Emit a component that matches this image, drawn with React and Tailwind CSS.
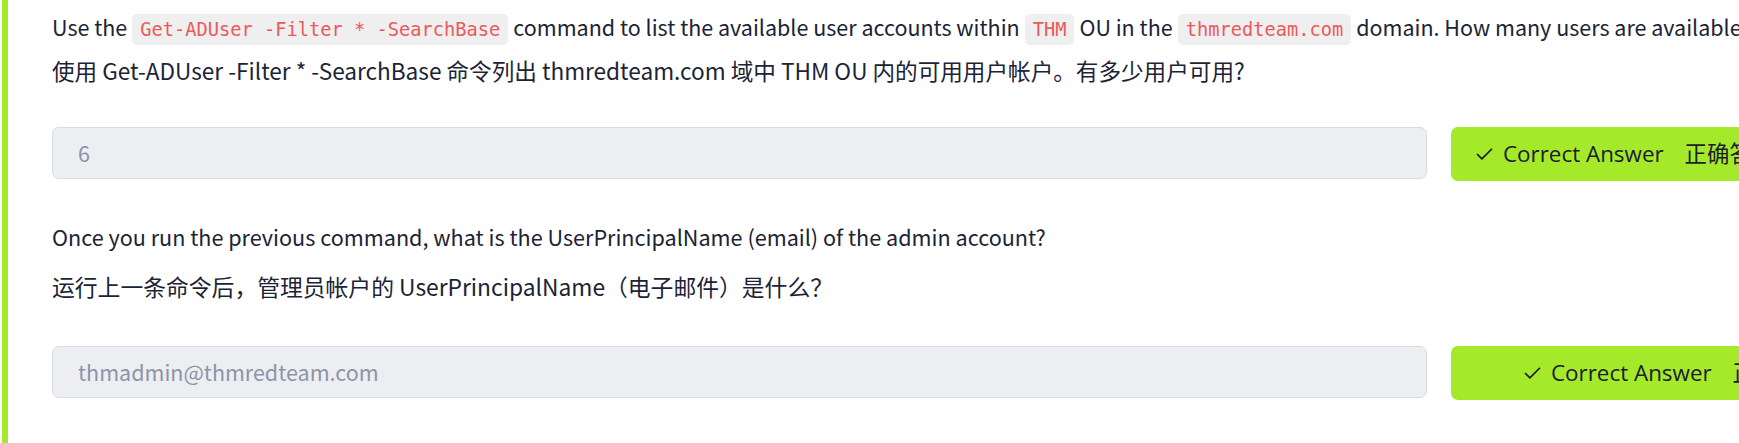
import { Check } from "lucide-react";

const body = { fontFamily: '"Noto Sans CJK SC", "Noto Sans", sans-serif' };
const mono = { fontFamily: '"DejaVu Sans Mono", "Liberation Mono", monospace' };

const Code = ({ children }) => (
    <code style={mono} className="mx-[5px] rounded-[5px] bg-[#efefef] px-[8px] py-[5px] text-[18.7px] text-[#eb5a5a]">
        {children}
    </code>
);

const AnswerRow = ({ value, pad }) => (
    <div className="flex items-start gap-[24px]">
        <div className="flex h-[52px] w-[1375px] shrink-0 items-center rounded-[7px] border border-[#d8dbe2] bg-[#edeef2] pl-[25px] text-[21.5px] text-[#8c95a8]">
            {value}
        </div>
        <button
            className={`flex h-[54px] w-[460px] shrink-0 items-center gap-[8px] rounded-[7px] bg-[#a4ea2a] text-[22.4px] text-[#1c1c2b] ${pad}`}
            style={{ fontFamily: '"Open Sans", "Noto Sans CJK SC", sans-serif' }}
        >
            <Check size={21} strokeWidth={2} />
            <span className="whitespace-nowrap">
                Correct Answer<span className="ml-[21px]">正确答案</span>
            </span>
        </button>
    </div>
);

const App = () => {
    return (
        <div style={body} className="flex h-[443px] w-[1739px] overflow-hidden bg-white text-[#1c2336]">
            <div className="ml-[2px] w-[6px] shrink-0 bg-[#a4ea2a]"></div>
            <div className="flex min-w-0 flex-1 flex-col pl-[44px] pt-[12px]">
                <p className="whitespace-nowrap text-[21.5px] leading-[30px]">
                    Use the<Code>Get-ADUser -Filter * -SearchBase</Code>command to list the available user accounts within<Code>THM</Code>OU in the<Code>thmredteam.com</Code>domain. How many users are available?
                </p>
                <p className="mt-[11px] whitespace-nowrap text-[22.6px] leading-[30px]">
                    使用 Get-ADUser -Filter * -SearchBase 命令列出 thmredteam.com 域中 THM OU 内的可用用户帐户。有多少用户可用?
                </p>
                <div className="mt-[41px]">
                    <AnswerRow value="6" pad="pl-[23px]" />
                </div>
                <p className="mt-[41px] whitespace-nowrap text-[21.6px] leading-[30px]">
                    Once you run the previous command, what is the UserPrincipalName (email) of the admin account?
                </p>
                <p className="mt-[20px] whitespace-nowrap text-[22.8px] leading-[30px]">
                    运行上一条命令后，管理员帐户的 UserPrincipalName（电子邮件）是什么？
                </p>
                <div className="mt-[44px]">
                    <AnswerRow value="thmadmin@thmredteam.com" pad="pl-[71px]" />
                </div>
            </div>
        </div>
    );
};

export default App;
